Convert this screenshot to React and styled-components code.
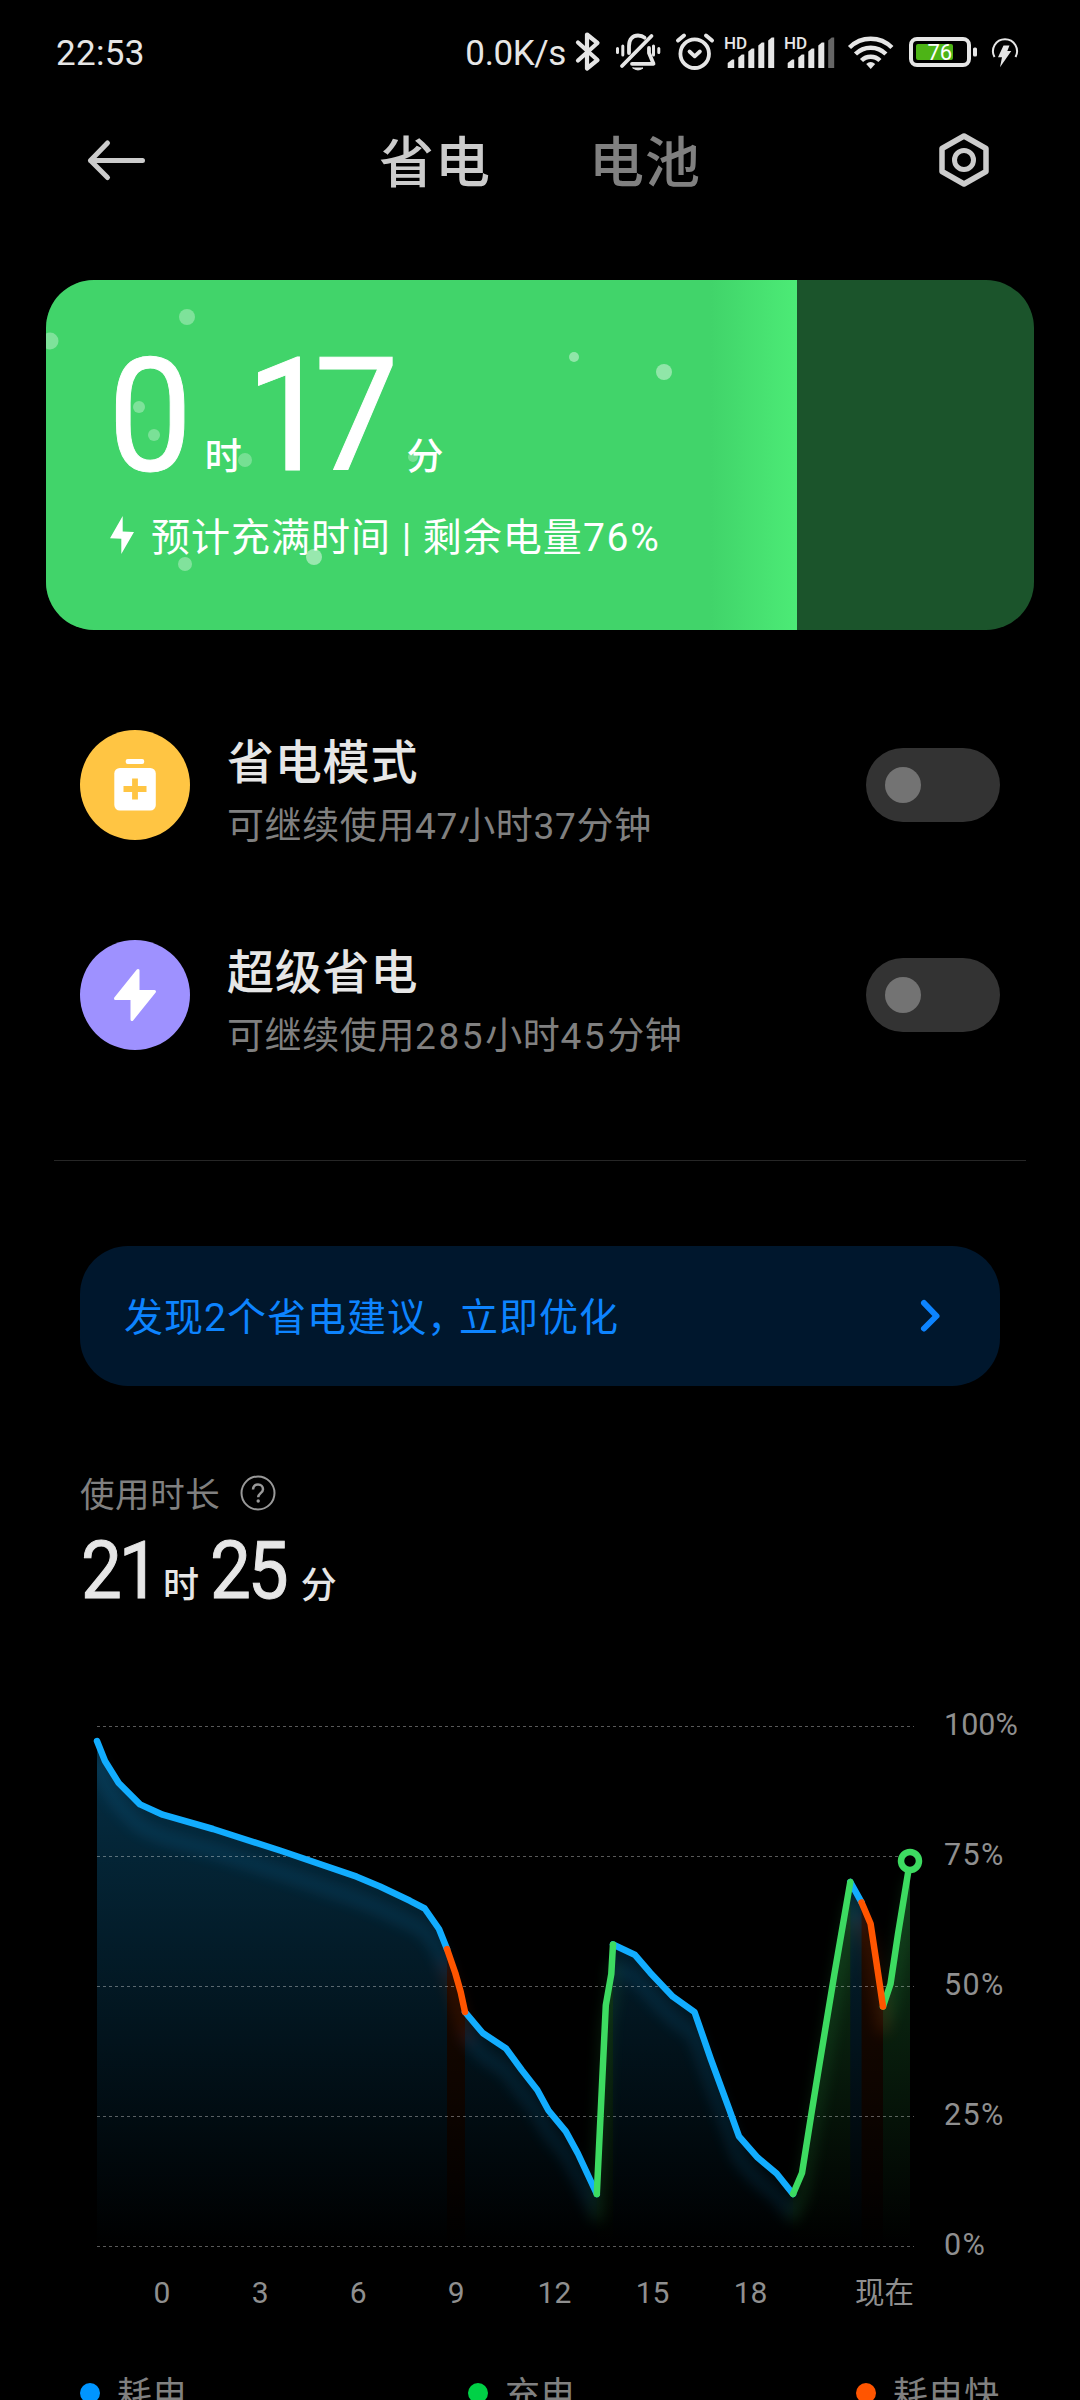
import React from 'react'
import styled, { createGlobalStyle } from 'styled-components'

const GlobalStyle = createGlobalStyle`
  body {
    margin: 0;
    background: #000;
  }
`
const Screen = styled.div`
  width: 1080px;
  height: 2400px;
  overflow: hidden;
  background: #000;
  color: #e6e6e6;
  font-family: Roboto, 'Noto Sans CJK SC', sans-serif;
  svg {
    display: block;
    flex: none;
  }
`
const StatusBar = styled.div`
  display: flex;
  align-items: center;
  height: 104px;
  padding: 0 56px 0 56px;
  font-size: 35px;
  line-height: 44px;
  .time {
    flex: 1;
    padding-top: 3px;
    letter-spacing: 0.3px;
  }
  .speed {
    padding-top: 3px;
    margin-right: 4px;
    letter-spacing: -0.4px;
  }
`
const Header = styled.header`
  display: flex;
  align-items: center;
  justify-content: space-between;
  height: 112px;
  padding: 0 84px;
`
const Tabs = styled.nav`
  display: flex;
  gap: 98px;
  padding: 5px 0 0 0;
`
const Tab = styled.span`
  font-size: 55px;
  line-height: 64px;
  font-weight: 500;
  letter-spacing: 1px;
  color: ${(props) => (props.$active ? '#cccccc' : '#808080')};
`
const Card = styled.section`
  position: relative;
  height: 350px;
  margin: 64px 46px 50px;
  border-radius: 48px;
  overflow: hidden;
  background: #1b542b;
  color: #fff;
`
const Fill = styled.div`
  position: absolute;
  top: 0;
  left: 0;
  height: 100%;
  background: linear-gradient(
    to right,
    #41d46a calc(100% - 86px),
    #4ceb76 100%
  );
`
const CardBody = styled.div`
  position: relative;
  padding: 56px 0 0 62px;
`
const BigTime = styled.div`
  display: flex;
  align-items: baseline;
  height: 160px;
  line-height: 160px;
  font-size: 158px;
  .number {
    letter-spacing: -17px;
    transform: scaleX(0.95);
    transform-origin: left;
    -webkit-text-stroke: 1px #fff;
  }
  .unit {
    font-size: 37px;
    font-weight: 500;
  }
  .hour {
    margin: 0 4px 0 25px;
  }
  .minute {
    margin-left: 17px;
  }
`
const CardNote = styled.div`
  display: flex;
  align-items: center;
  height: 60px;
  margin-top: 12px;
  font-size: 39px;
  line-height: 60px;
  letter-spacing: 1px;
  white-space: pre;
  svg {
    margin: -6px 17px 0 2px;
  }
  .percent {
    letter-spacing: 1.8px;
  }
`
const ModeRow = styled.div`
  display: flex;
  align-items: center;
  height: 210px;
  padding: 0 80px;
`
const ModeIcon = styled.div`
  width: 110px;
  height: 110px;
  border-radius: 50%;
  background: ${(props) => props.$color};
`
const ModeText = styled.div`
  flex: 1;
  padding: 19px 0 0 37px;
  h3 {
    margin: 0;
    font-size: 47px;
    line-height: 64px;
    font-weight: 500;
    letter-spacing: 0.8px;
  }
  p {
    margin: 0;
    font-size: 37px;
    line-height: 64px;
    letter-spacing: 0.6px;
    color: #808080;
  }
`
const Digits = styled.span`
  letter-spacing: ${(props) => (props.$wide ? '2.6px' : '0.8px')};
`
const Toggle = styled.div`
  display: flex;
  align-items: center;
  box-sizing: border-box;
  width: 134px;
  height: 74px;
  padding-left: 19px;
  border-radius: 37px;
  background: #333;
  &::before {
    content: '';
    width: 36px;
    height: 36px;
    border-radius: 50%;
    background: #737373;
  }
`
const Divider = styled.hr`
  height: 1px;
  margin: 60px 54px 85px;
  border: 0;
  background: #262626;
`
const Banner = styled.div`
  display: flex;
  align-items: center;
  justify-content: space-between;
  height: 140px;
  margin: 0 80px;
  padding: 0 58px 0 44px;
  box-sizing: border-box;
  border-radius: 48px;
  background: #00172d;
  color: #0d84ff;
  font-size: 39px;
  line-height: 60px;
  p {
    margin: 0;
    padding-top: 4px;
    letter-spacing: 1px;
  }
  .comma {
    letter-spacing: -7px;
  }
`
const UsageLabel = styled.div`
  display: flex;
  align-items: center;
  height: 40px;
  margin: 87px 80px 0;
  font-size: 34.5px;
  line-height: 40px;
  letter-spacing: 0.6px;
  color: #808080;
  span {
    padding-top: 3px;
    margin-right: 18px;
  }
`
const UsageValue = styled.div`
  display: flex;
  align-items: baseline;
  height: 94px;
  margin: 11px 80px 62px;
  font-size: 80px;
  line-height: 94px;
  .number {
    margin: 0 -8px 0 1px;
    letter-spacing: -3.5px;
    transform: scaleX(0.91);
    transform-origin: left;
    -webkit-text-stroke: 1px #e6e6e6;
  }
  .unit {
    font-size: 36px;
    font-weight: 500;
  }
  .hour {
    margin: 0 10px 0 7px;
  }
  .minute {
    margin-left: 16px;
  }
`
const Legend = styled.div`
  display: grid;
  grid-template-columns: repeat(3, 388px);
  margin: 53px 0 0 80px;
`
const LegendItem = styled.div`
  display: flex;
  align-items: center;
  height: 40px;
  font-size: 35px;
  line-height: 40px;
  letter-spacing: 0.6px;
  color: #808080;
  &::before {
    content: '';
    width: 20px;
    height: 20px;
    margin-right: 17px;
    border-radius: 50%;
    background: ${(props) => props.$color};
  }
  span {
    padding-top: 6px;
  }
`

const BLUE = '#12adff'
const GREEN = '#3ddb61'
const ORANGE = '#ff5500'
const BOTTOM = 2246.5

const segments = [
  {
    color: 'blue',
    points: [
      [97, 1741], [105, 1761], [118.7, 1783], [140, 1804.4], [162.7, 1814.7],
      [213, 1829], [280, 1850.5], [356.7, 1876.7], [380, 1886.5], [410, 1900.8],
      [424.7, 1908.5], [439, 1929], [447, 1949],
    ],
  },
  {
    color: 'blue',
    points: [
      [465, 2012], [482.7, 2033], [506, 2048.5], [521.7, 2070], [537.3, 2090],
      [548.5, 2110.5], [565.8, 2131.4], [577.9, 2153.5], [596.8, 2194],
    ],
  },
  {
    color: 'blue',
    points: [
      [613, 1944.5], [634.7, 1954.7], [650.2, 1972.7], [672.9, 1996.7],
      [694.6, 2012.2], [711, 2059.6], [729, 2108.6], [739, 2136.3],
      [757.6, 2157.6], [776.6, 2173.5], [793, 2194],
    ],
  },
  { color: 'blue', points: [[850.3, 1882], [861.6, 1902.4]] },
  {
    color: 'green',
    points: [[596.8, 2194], [605.8, 2005.3], [611.3, 1974], [613, 1944.5]],
  },
  {
    color: 'green',
    points: [
      [793, 2194], [802, 2173], [812, 2110], [819, 2067], [834.4, 1974],
      [850.3, 1882],
    ],
  },
  {
    color: 'green',
    points: [[883, 2006.5], [890.5, 1984], [898, 1934], [910, 1861]],
  },
  {
    color: 'orange',
    points: [[447, 1949], [455.3, 1973], [460.7, 1992], [465, 2012]],
  },
  {
    color: 'orange',
    points: [[861.6, 1902.4], [870.6, 1923.7], [875.7, 1957.6], [883, 2006.5]],
  },
]
const colors = { blue: BLUE, green: GREEN, orange: ORANGE }
const fade = { blue: 0.28, green: 0.34, orange: 0.18 }

const toLine = (points) => points.map((p) => p.join(',')).join(' ')
const toArea = (points) =>
  `${points[0][0]},${BOTTOM} ${toLine(points)} ${points[points.length - 1][0]},${BOTTOM}`

const levels = ['100%', '75%', '50%', '25%', '0%']
const hours = ['0', '3', '6', '9', '12', '15', '18']

const bubbles = [
  [141, 37, 8, 0.32], [4, 61, 8.5, 0.32], [93, 127, 6, 0.32],
  [108, 155, 6, 0.3], [199, 180, 7, 0.28], [367, 177, 5, 0.28],
  [139, 284, 7, 0.34], [268, 277, 8, 0.46], [528, 77, 5, 0.42],
  [618, 92, 8, 0.42],
]

const Signal = ({ weak }) => (
  <svg width='60' height='60' fill='#e6e6e6'>
    <text x='6' y='26.5' fontSize='17' fontWeight='500'>
      HD
    </text>
    <path d='M9.7 46v-5l4.5-3.5h2V46zM20.3 46V35.5l3.5-3h2.5V46zM30.3 46V29.5l3.5-3h2.5V46zM40.3 46V23.5l3.5-3h2.5V46z' />
    <path d='M50.2 46V18.5l3.5-3h2.5V46z' fill={weak ? '#666' : '#e6e6e6'} />
  </svg>
)

const StatusIcons = () => (
  <>
    <svg width='36' height='60' fill='none' stroke='#e6e6e6' strokeWidth='4.2' strokeLinecap='round' strokeLinejoin='round'>
      <path d='M8 20.5l19.5 17.5L17 46.5v-34L27.5 21L8 38.5' />
    </svg>
    <svg width='66' height='60' fill='none' stroke='#e6e6e6' strokeWidth='3.8' strokeLinecap='round' strokeLinejoin='round'>
      <path d='M16 44L45.500 14' />
      <path d='M23 31V24C23 17 27 13.500 32 13.500c3 0 5 .8 6.500 2.200M43 26v5l4.500 10.800H26' />
      <path d='M27 46h10q-5 4-10 0z' fill='#e6e6e6' strokeWidth='1' />
      <path d='M11.500 26.500v4M16.800 24v9M47.500 24v9M52.800 26.500v4' strokeWidth='3' />
    </svg>
    <svg width='46' height='60' fill='none' stroke='#e6e6e6' strokeWidth='3.8' strokeLinecap='round' strokeLinejoin='round'>
      <circle cx='22.700' cy='31.700' r='14.300' />
      <path d='M6 18.500l6-5M34 13.500l6 5' strokeWidth='4' />
      <path d='M17.500 29.500l5.200 4.800 5.200-4.800' />
    </svg>
    <Signal />
    <Signal weak />
    <svg width='62' height='60' fill='none' stroke='#e6e6e6' strokeWidth='4.4'>
      <path d='M11.500 25.500a30 30 0 0 1 42.400 0' />
      <path d='M17.500 32a21.500 21.500 0 0 1 30.400 0' />
      <path d='M23.500 38.500a13 13 0 0 1 18.400 0' />
      <path d='M32.700 47l-4.500-5q4.500-4 9 0z' fill='#e6e6e6' strokeWidth='0' />
    </svg>
    <svg width='80' height='60' fill='#e6e6e6'>
      <rect x='11' y='17' width='58' height='26' rx='6' fill='none' stroke='#e6e6e6' strokeWidth='4' />
      <rect x='16' y='22' width='37' height='16' rx='2' fill='#4db416' />
      <rect x='73' y='25.500' width='4' height='9' rx='1.500' />
      <text x='27.500' y='38.300' fontSize='22' fill='#fff'>
        76
      </text>
    </svg>
    <svg width='44' height='60' fill='#e6e6e6'>
      <path d='M14.500 35a12 12 0 1 1 21 0' fill='none' stroke='#e6e6e6' strokeWidth='2' />
      <path d='M23.500 23.500h6l-2.200 5.500h4L20 45.300l2-10h-4z' />
    </svg>
  </>
)

const Chart = () => (
  <svg width='1080' height='640' viewBox='0 1680 1080 640'>
    <defs>
      {Object.keys(colors).map((name) => (
        <linearGradient key={name} id={name} gradientUnits='userSpaceOnUse' x1='0' y1='1726' x2='0' y2={BOTTOM}>
          <stop offset='0' stopColor={colors[name]} stopOpacity={fade[name]} />
          <stop offset='1' stopColor={colors[name]} stopOpacity='0' />
        </linearGradient>
      ))}
      <filter id='glow' filterUnits='userSpaceOnUse' x='60' y='1680' width='900' height='600'>
        <feGaussianBlur stdDeviation='7' />
      </filter>
      <clipPath id='plot'>
        <rect x='97' y='1700' width='813' height='560' />
      </clipPath>
    </defs>
    {segments.map(({ color, points }, i) => (
      <polygon key={i} points={toArea(points)} fill={`url(#${color})`} />
    ))}
    <g clipPath='url(#plot)'>
      <g filter='url(#glow)' transform='translate(0 22)' opacity='0.13' fill='none' strokeWidth='12' strokeLinecap='round'>
        {segments.map(({ color, points }, i) => (
          <polyline key={i} points={toLine(points)} stroke={colors[color]} />
        ))}
      </g>
    </g>
    {levels.map((label, i) => (
      <g key={label}>
        <path d={`M97 ${1726.5 + i * 130}H914`} stroke='#fff' strokeOpacity='0.35' strokeDasharray='3 3' />
        <text x='944' y={1735 + i * 130} fontSize='30.5' fill='#8f8f8f' letterSpacing={i ? 1.4 : 0}>
          {label}
        </text>
      </g>
    ))}
    <g fill='none' strokeWidth='6.500' strokeLinecap='round' strokeLinejoin='round'>
      {segments.map(({ color, points }, i) => (
        <polyline key={i} points={toLine(points)} stroke={colors[color]} />
      ))}
    </g>
    <circle cx='910' cy='1861' r='9' fill='#000' stroke={GREEN} strokeWidth='6.500' />
    {hours.map((hour, i) => (
      <text key={hour} x={162 + i * 98.1} y='2303' fontSize='30' fill='#8f8f8f' textAnchor='middle'>
        {hour}
      </text>
    ))}
    <text x='884.500' y='2303' fontSize='29.500' fill='#8f8f8f' textAnchor='middle'>
      现在
    </text>
  </svg>
)

const App = () => {
  return (
    <Screen>
      <GlobalStyle />
      <StatusBar>
        <span className='time'>22:53</span>
        <span className='speed'>0.0K/s</span>
        <StatusIcons />
      </StatusBar>

      <Header>
        <svg width='64' height='48' fill='none' stroke='#ccc' strokeWidth='5' strokeLinecap='round' strokeLinejoin='round'>
          <path d='M58.500 24.500H6.500M23.500 7L6.500 24.500l17 17' />
        </svg>
        <Tabs>
          <Tab $active>省电</Tab>
          <Tab>电池</Tab>
        </Tabs>
        <svg width='64' height='64' fill='none' stroke='#ccc' strokeLinejoin='round'>
          <path d='M32 8l22 12.500v23L32 56 10 43.500v-23z' strokeWidth='5.500' />
          <circle cx='32' cy='32' r='9.500' strokeWidth='5' />
        </svg>
      </Header>

      <Card>
        <Fill style={{ width: '76%' }}>
          <svg width='751' height='350' fill='#fff'>
            {bubbles.map(([cx, cy, r, opacity]) => (
              <circle key={`${cx}-${cy}`} cx={cx} cy={cy} r={r} opacity={opacity} />
            ))}
          </svg>
        </Fill>
        <CardBody>
          <BigTime>
            <span className='number'>0</span>
            <span className='unit hour'>时</span>
            <span className='number'>17</span>
            <span className='unit minute'>分</span>
          </BigTime>
          <CardNote>
            <svg width='24' height='38' fill='#fff'>
              <path d='M12.700 0v15.500L24 16 11.300 38V22.700L0 22.300z' />
            </svg>
            预计充满时间 | 剩余电量<span className='percent'>76%</span>
          </CardNote>
        </CardBody>
      </Card>

      <ModeRow>
        <ModeIcon $color='#ffc543'>
          <svg width='110' height='110' fill='#fff'>
            <rect x='45.700' y='29' width='18.500' height='5' rx='2' />
            <rect x='34.300' y='38' width='41.500' height='42.500' rx='5.500' />
            <path d='M43.500 59h23M55 48.500v21' stroke='#ffc543' strokeWidth='5.800' />
          </svg>
        </ModeIcon>
        <ModeText>
          <h3>省电模式</h3>
          <p>
            可继续使用<Digits>47</Digits>小时<Digits>37</Digits>分钟
          </p>
        </ModeText>
        <Toggle />
      </ModeRow>
      <ModeRow>
        <ModeIcon $color='#9e91ff'>
          <svg width='110' height='110' fill='#fff' stroke='#fff' strokeWidth='3' strokeLinejoin='round'>
            <path d='M58 30.500v21h16.500L52 79.500v-21H35.500z' />
          </svg>
        </ModeIcon>
        <ModeText>
          <h3>超级省电</h3>
          <p>
            可继续使用<Digits $wide>285</Digits>小时<Digits $wide>45</Digits>分钟
          </p>
        </ModeText>
        <Toggle />
      </ModeRow>

      <Divider />

      <Banner>
        <p>
          发现2个省电建议<span className='comma'>，</span>立即优化
        </p>
        <svg width='24' height='36' fill='none' stroke='#0d84ff' strokeWidth='6' strokeLinecap='round' strokeLinejoin='round'>
          <path d='M6 5l12.500 13L6 30.500' />
        </svg>
      </Banner>

      <UsageLabel>
        <span>使用时长</span>
        <svg width='40' height='40' fill='none' stroke='#999' strokeWidth='2'>
          <circle cx='20' cy='20' r='16.500' />
          <path d='M15 16.500c0-3 2-5 5-5s5 2 5 4.700c0 3.800-4.800 4-4.800 8' strokeWidth='2.500' />
          <circle cx='20.200' cy='28' r='1.700' fill='#999' stroke='none' />
        </svg>
      </UsageLabel>
      <UsageValue>
        <span className='number'>21</span>
        <span className='unit hour'>时</span>
        <span className='number'>25</span>
        <span className='unit minute'>分</span>
      </UsageValue>

      <Chart />

      <Legend>
        <LegendItem $color='#0095ff'>
          <span>耗电</span>
        </LegendItem>
        <LegendItem $color='#00d146'>
          <span>充电</span>
        </LegendItem>
        <LegendItem $color='#ff5500'>
          <span>耗电快</span>
        </LegendItem>
      </Legend>
    </Screen>
  )
}

export default App
